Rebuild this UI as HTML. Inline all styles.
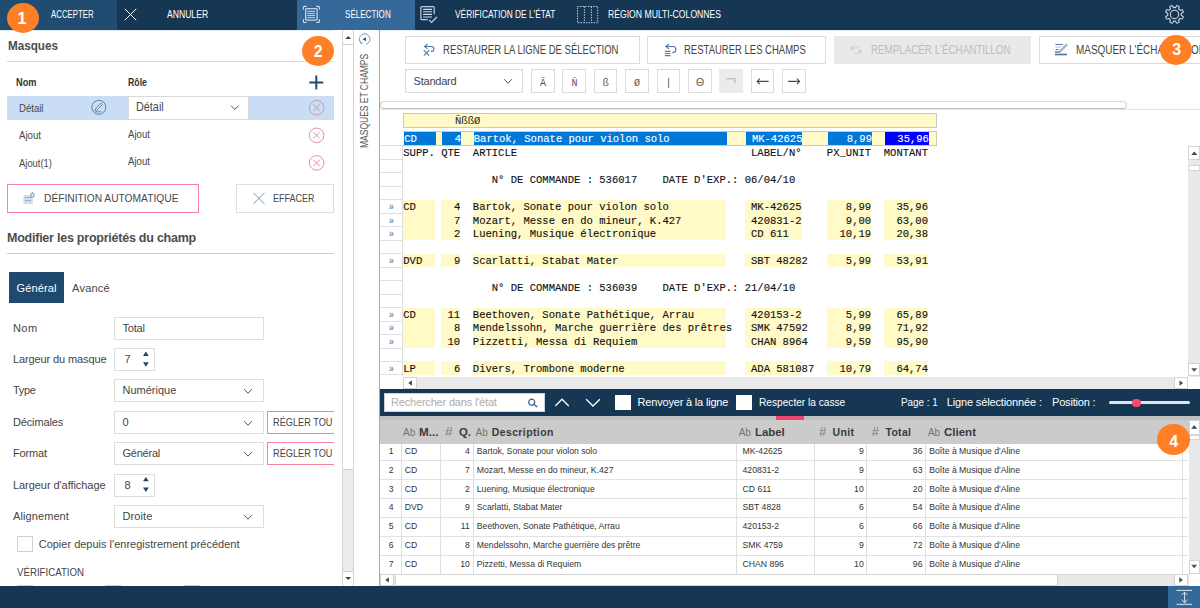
<!DOCTYPE html>
<html lang="fr"><head><meta charset="utf-8"><title>Monarch</title><style>
html,body{margin:0;padding:0;}
body{width:1200px;height:608px;overflow:hidden;background:#fff;font-family:"Liberation Sans",sans-serif;position:relative;}
.a{position:absolute;box-sizing:border-box;}
.t{white-space:pre;}
</style></head><body>
<div class="a" style="left:0px;top:0px;width:1200px;height:30px;background:#163754;"></div>
<div class="a" style="left:0px;top:0px;width:117px;height:30px;background:#204c72;"></div>
<div class="a" style="left:297.4px;top:0px;width:117.6px;height:30px;background:#35699a;"></div>
<span class="a t" style="top:9.00px;font-size:10.5px;line-height:10.5px;color:#fff;transform:scaleX(0.7467);left:50.80px;transform-origin:0 50%;">ACCEPTER</span>
<svg class="a" style="left:124px;top:8px;" width="14" height="14" viewBox="-0.5 -0.5 14 14" fill="none"><path d="M0.3 0.3L11.7 11.7M11.7 0.3L0.3 11.7" stroke="#fff" stroke-width="1"/></svg>
<span class="a t" style="top:9.00px;font-size:10.5px;line-height:10.5px;color:#fff;transform:scaleX(0.8189);left:167.20px;transform-origin:0 50%;">ANNULER</span>
<svg class="a" style="left:302px;top:5px;" width="20" height="20" viewBox="0 0 20 20" fill="none"><g stroke="#d3dfeb" stroke-width="1.1"><path d="M1.4 4.6V2.4Q1.4 1.4 2.4 1.4H4.6M14.2 1.4H16.4Q17.4 1.4 17.4 2.4V4.6M17.4 14.3V16.5Q17.4 17.5 16.4 17.5H14.2M4.6 17.5H2.4Q1.4 17.5 1.4 16.5V14.3"/><rect x="3.7" y="3.7" width="11.4" height="11.5" rx="1" stroke-width="1.3" stroke="#c3d3e3"/><path d="M5.3 6.35H13M5.3 8.45H13M5.3 10.55H13M5.3 12.65H13" stroke-width=".9"/></g></svg>
<span class="a t" style="top:9.00px;font-size:10.5px;line-height:10.5px;color:#fff;transform:scaleX(0.7679);left:345.00px;transform-origin:0 50%;">SÉLECTION</span>
<svg class="a" style="left:420px;top:5px;" width="19" height="20" viewBox="0 0 19 20" fill="none"><g stroke="#cfdbe7" stroke-width="1.1"><path d="M7.8 14.7H1.9Q0.9 14.7 0.9 13.7V2.7Q0.9 1.7 1.9 1.7H13.2Q14.2 1.7 14.2 2.7V9.3" stroke-width="1.2" stroke="#bccbda"/><path d="M3.1 4.4H12M3.1 6.7H12M3.1 9.4H12M3.1 12H12" stroke-width="1.1"/><path d="M9.2 14.9L11.5 17.5L16.9 12"/></g></svg>
<span class="a t" style="top:9.00px;font-size:10.5px;line-height:10.5px;color:#fff;transform:scaleX(0.7943);left:454.80px;transform-origin:0 50%;">VÉRIFICATION DE L&#x27;ÉTAT</span>
<svg class="a" style="left:577px;top:6px;" width="23" height="19" viewBox="0 0 23 19" fill="none"><g stroke="#c5d2df" stroke-width="1" stroke-dasharray="1.4 1.2"><rect x="0.5" y="0.5" width="20.2" height="16.2"/><path d="M7.4 0.5V16.5M14.4 0.5V16.5"/></g></svg>
<span class="a t" style="top:9.00px;font-size:10.5px;line-height:10.5px;color:#fff;transform:scaleX(0.8226);left:607.60px;transform-origin:0 50%;">RÉGION MULTI-COLONNES</span>
<svg class="a" style="left:1164px;top:4px;" width="22" height="22" viewBox="-0.5 -0.4 22 22" fill="none"><g stroke="#cbd8e5" stroke-width="1.1" stroke-linejoin="round"><circle cx="10" cy="10" r="4.2"/><path d="M16.75 10.00L16.74 10.27L16.73 10.53L16.70 10.79L16.90 11.09L17.80 11.55L18.67 12.08L18.81 12.48L18.70 12.83L18.58 13.17L18.45 13.50L18.31 13.83L18.15 14.15L17.98 14.47L17.60 14.66L16.61 14.42L15.65 14.11L15.30 14.18L15.13 14.38L14.96 14.58L14.77 14.77L14.58 14.96L14.38 15.13L14.18 15.30L14.11 15.65L14.42 16.61L14.66 17.60L14.47 17.98L14.15 18.15L13.83 18.31L13.50 18.45L13.17 18.58L12.83 18.70L12.48 18.81L12.08 18.67L11.55 17.80L11.09 16.90L10.79 16.70L10.53 16.73L10.27 16.74L10.00 16.75L9.73 16.74L9.47 16.73L9.21 16.70L8.91 16.90L8.45 17.80L7.92 18.67L7.52 18.81L7.17 18.70L6.83 18.58L6.50 18.45L6.17 18.31L5.85 18.15L5.53 17.98L5.34 17.60L5.58 16.61L5.89 15.65L5.82 15.30L5.62 15.13L5.42 14.96L5.23 14.77L5.04 14.58L4.87 14.38L4.70 14.18L4.35 14.11L3.39 14.42L2.40 14.66L2.02 14.47L1.85 14.15L1.69 13.83L1.55 13.50L1.42 13.17L1.30 12.83L1.19 12.48L1.33 12.08L2.20 11.55L3.10 11.09L3.30 10.79L3.27 10.53L3.26 10.27L3.25 10.00L3.26 9.73L3.27 9.47L3.30 9.21L3.10 8.91L2.20 8.45L1.33 7.92L1.19 7.52L1.30 7.17L1.42 6.83L1.55 6.50L1.69 6.17L1.85 5.85L2.02 5.53L2.40 5.34L3.39 5.58L4.35 5.89L4.70 5.82L4.87 5.62L5.04 5.42L5.23 5.23L5.42 5.04L5.62 4.87L5.82 4.70L5.89 4.35L5.58 3.39L5.34 2.40L5.53 2.02L5.85 1.85L6.17 1.69L6.50 1.55L6.83 1.42L7.17 1.30L7.52 1.19L7.92 1.33L8.45 2.20L8.91 3.10L9.21 3.30L9.47 3.27L9.73 3.26L10.00 3.25L10.27 3.26L10.53 3.27L10.79 3.30L11.09 3.10L11.55 2.20L12.08 1.33L12.48 1.19L12.83 1.30L13.17 1.42L13.50 1.55L13.83 1.69L14.15 1.85L14.47 2.02L14.66 2.40L14.42 3.39L14.11 4.35L14.18 4.70L14.38 4.87L14.58 5.04L14.77 5.23L14.96 5.42L15.13 5.62L15.30 5.82L15.65 5.89L16.61 5.58L17.60 5.34L17.98 5.53L18.15 5.85L18.31 6.17L18.45 6.50L18.58 6.83L18.70 7.17L18.81 7.52L18.67 7.92L17.80 8.45L16.90 8.91L16.70 9.21L16.73 9.47L16.74 9.73z"/></g></svg>
<div class="a" style="left:0px;top:29.7px;width:1200px;height:1px;background:#e4eaf1;"></div>
<span class="a t" style="top:40.00px;font-size:12.5px;line-height:12.5px;color:#4d4d4d;font-weight:700;transform:scaleX(0.9346);left:7.50px;transform-origin:0 50%;">Masques</span>
<div class="a" style="left:7px;top:61px;width:327px;height:1px;background:#d9d9d9;"></div>
<span class="a t" style="top:77.00px;font-size:10.5px;line-height:10.5px;color:#333;font-weight:700;transform:scaleX(0.8782);left:15.80px;transform-origin:0 50%;">Nom</span>
<span class="a t" style="top:77.00px;font-size:10.5px;line-height:10.5px;color:#333;font-weight:700;transform:scaleX(0.8346);left:128.30px;transform-origin:0 50%;">Rôle</span>
<svg class="a" style="left:309px;top:75px;" width="16" height="16" viewBox="-0.3 -0.5 16 16" fill="none"><path d="M7 0V14M0 7H14" stroke="#1f4a70" stroke-width="2"/></svg>
<div class="a" style="left:7px;top:96.1px;width:327px;height:23.6px;background:#c9ddf4;"></div>
<span class="a t" style="top:103.00px;font-size:11px;line-height:11px;color:#484848;transform:scaleX(0.8711);left:19.00px;transform-origin:0 50%;">Détail</span>
<svg class="a" style="left:91px;top:99px;" width="17" height="18" viewBox="0 -0.5 17 18" fill="none"><g stroke="#4f779f" stroke-width=".9"><circle cx="7.8" cy="7.8" r="7"/><path d="M9.9 3.6L11.4 5.1L5.6 10.9L3.9 11.3L4.4 9.4zM4.5 12.3H10.5" stroke-width=".8"/></g></svg>
<div class="a" style="left:127.9px;top:96.4px;width:121.3px;height:23.2px;background:#fff;border:1px solid #d9d9d9;"></div>
<span class="a t" style="top:101.00px;font-size:12px;line-height:12px;color:#484848;transform:scaleX(0.9026);left:136.30px;transform-origin:0 50%;">Détail</span>
<svg class="a" style="left:230px;top:105px;" width="11" height="7" viewBox="-0.6 -0.2 11 7" fill="none"><path d="M0.4 0.4L4.2 4.3L8 0.4" stroke="#555" stroke-width="1"/></svg>
<svg class="a" style="left:308px;top:99px;" width="18" height="18" viewBox="-0.6 -0.7 18 18" fill="none"><g stroke="#e58f9b" stroke-width="1"><circle cx="8" cy="8" r="7.3"/><path d="M4.8 4.8L11.2 11.2M11.2 4.8L4.8 11.2"/></g></svg>
<svg class="a" style="left:308px;top:127px;" width="18" height="18" viewBox="-0.6 -0.3 18 18" fill="none"><g stroke="#e58f9b" stroke-width="1"><circle cx="8" cy="8" r="7.3"/><path d="M4.8 4.8L11.2 11.2M11.2 4.8L4.8 11.2"/></g></svg>
<svg class="a" style="left:308px;top:154px;" width="18" height="18" viewBox="-0.6 -0.9 18 18" fill="none"><g stroke="#e58f9b" stroke-width="1"><circle cx="8" cy="8" r="7.3"/><path d="M4.8 4.8L11.2 11.2M11.2 4.8L4.8 11.2"/></g></svg>
<span class="a t" style="top:130.00px;font-size:11px;line-height:11px;color:#484848;transform:scaleX(0.8773);left:19.00px;transform-origin:0 50%;">Ajout</span>
<span class="a t" style="top:129.00px;font-size:11px;line-height:11px;color:#484848;transform:scaleX(0.8773);left:128.00px;transform-origin:0 50%;">Ajout</span>
<span class="a t" style="top:158.00px;font-size:11px;line-height:11px;color:#484848;transform:scaleX(0.8564);left:19.00px;transform-origin:0 50%;">Ajout(1)</span>
<span class="a t" style="top:156.00px;font-size:11px;line-height:11px;color:#484848;transform:scaleX(0.8773);left:128.00px;transform-origin:0 50%;">Ajout</span>
<div class="a" style="left:7px;top:184px;width:192px;height:29px;background:#fff;border:1px solid #f9839a;"></div>
<span class="a t" style="top:193.00px;font-size:11.5px;line-height:11.5px;color:#484848;transform:scaleX(0.8907);left:43.60px;transform-origin:0 50%;">DÉFINITION AUTOMATIQUE</span>
<svg class="a" style="left:22px;top:191px;" width="16" height="16" viewBox="0 0 16 16" fill="none"><rect x="1.4" y="3.9" width="9.4" height="9.4" rx="1" fill="#d3dfea"/><g stroke="#5b7fa3" stroke-width=".9"><path d="M3 6.6H9.4M3 9.6H9.4" stroke-dasharray="1.2 1"/><path d="M10.4 1.2L11.1 3L13 3.3L11.6 4.5L12 6.3L10.4 5.4L8.9 6.3L9.3 4.5L8 3.3L9.8 3z" stroke-width=".7" fill="#eef3f8"/></g></svg>
<div class="a" style="left:236px;top:184px;width:98px;height:29px;background:#fff;border:1px solid #dfdfdf;"></div>
<svg class="a" style="left:253px;top:192px;" width="13" height="14" viewBox="0 -0.5 13 14" fill="none"><path d="M0.3 0.3L11.5 11.5M11.5 0.3L0.3 11.5" stroke="#7894b0" stroke-width="1"/></svg>
<span class="a t" style="top:193.00px;font-size:11.5px;line-height:11.5px;color:#484848;transform:scaleX(0.7823);left:272.50px;transform-origin:0 50%;">EFFACER</span>
<span class="a t" style="top:232.00px;font-size:12.5px;line-height:12.5px;color:#4d4d4d;font-weight:700;letter-spacing:-0.237px;left:7.00px;transform-origin:0 50%;">Modifier les propriétés du champ</span>
<div class="a" style="left:7px;top:253.2px;width:327px;height:1.2px;background:#cdcdcd;"></div>
<div class="a" style="left:9px;top:272px;width:55px;height:31px;background:#1f4a70;"></div>
<span class="a t" style="top:283.00px;font-size:11px;line-height:11px;color:#fff;letter-spacing:0.123px;left:16.50px;transform-origin:0 50%;">Général</span>
<span class="a t" style="top:283.00px;font-size:11px;line-height:11px;color:#454545;letter-spacing:0.250px;left:72.00px;transform-origin:0 50%;">Avancé</span>
<span class="a t" style="top:323.00px;font-size:11px;line-height:11px;color:#454545;letter-spacing:0.422px;left:13.00px;transform-origin:0 50%;">Nom</span>
<div class="a" style="left:114px;top:316.6px;width:150px;height:23.7px;background:#fff;border:1px solid #dedede;"></div>
<span class="a t" style="top:323.00px;font-size:11px;line-height:11px;color:#454545;letter-spacing:-0.210px;left:122.50px;transform-origin:0 50%;">Total</span>
<span class="a t" style="top:354.00px;font-size:11px;line-height:11px;color:#454545;letter-spacing:-0.112px;left:13.00px;transform-origin:0 50%;">Largeur du masque</span>
<div class="a" style="left:114.2px;top:348.2px;width:41px;height:23.3px;background:#fff;border:1px solid #dedede;"></div>
<span class="a t" style="top:354.00px;font-size:11px;line-height:11px;color:#454545;left:124.50px;">7</span>
<svg class="a" style="left:143px;top:351px;" width="7" height="18" viewBox="0 -0.6 7 18" fill="none"><path d="M2.9 0L5.8 4.4H0zM2.9 15.1L5.8 10.7H0z" fill="#1f4a70"/></svg>
<span class="a t" style="top:385.00px;font-size:11px;line-height:11px;color:#454545;letter-spacing:-0.340px;left:13.00px;transform-origin:0 50%;">Type</span>
<div class="a" style="left:114px;top:379.1px;width:150px;height:23px;background:#fff;border:1px solid #dedede;"></div>
<span class="a t" style="top:385.00px;font-size:11px;line-height:11px;color:#454545;letter-spacing:-0.001px;left:122.50px;transform-origin:0 50%;">Numérique</span>
<svg class="a" style="left:243px;top:388px;" width="11" height="8" viewBox="-0.7 -0.8 11 8" fill="none"><path d="M0.4 0.4L4.3 4.4L8.2 0.4" stroke="#555" stroke-width="1"/></svg>
<span class="a t" style="top:417.00px;font-size:11px;line-height:11px;color:#454545;letter-spacing:-0.151px;left:13.00px;transform-origin:0 50%;">Décimales</span>
<div class="a" style="left:114px;top:411.3px;width:150px;height:23px;background:#fff;border:1px solid #dedede;"></div>
<span class="a t" style="top:417.00px;font-size:11px;line-height:11px;color:#454545;left:122.50px;">0</span>
<svg class="a" style="left:243px;top:420px;" width="11" height="8" viewBox="-0.7 -0.8 11 8" fill="none"><path d="M0.4 0.4L4.3 4.4L8.2 0.4" stroke="#555" stroke-width="1"/></svg>
<div class="a" style="left:267px;top:411.3px;width:75px;height:23px;background:#fff;border:1px solid #f9839a;"></div>
<span class="a t" style="top:417.00px;font-size:11.5px;line-height:11.5px;color:#454545;transform:scaleX(0.8002);left:272.50px;transform-origin:0 50%;">RÉGLER TOU</span>
<span class="a t" style="top:448.00px;font-size:11px;line-height:11px;color:#454545;letter-spacing:-0.141px;left:13.00px;transform-origin:0 50%;">Format</span>
<div class="a" style="left:114px;top:442.3px;width:150px;height:23px;background:#fff;border:1px solid #dedede;"></div>
<span class="a t" style="top:448.00px;font-size:11px;line-height:11px;color:#454545;letter-spacing:-0.234px;left:122.50px;transform-origin:0 50%;">Général</span>
<svg class="a" style="left:243px;top:451px;" width="11" height="8" viewBox="-0.7 -0.8 11 8" fill="none"><path d="M0.4 0.4L4.3 4.4L8.2 0.4" stroke="#555" stroke-width="1"/></svg>
<div class="a" style="left:267px;top:442.3px;width:75px;height:23px;background:#fff;border:1px solid #f9839a;"></div>
<span class="a t" style="top:448.00px;font-size:11.5px;line-height:11.5px;color:#454545;transform:scaleX(0.8002);left:272.50px;transform-origin:0 50%;">RÉGLER TOU</span>
<span class="a t" style="top:480.00px;font-size:11px;line-height:11px;color:#454545;letter-spacing:-0.060px;left:13.00px;transform-origin:0 50%;">Largeur d&#x27;affichage</span>
<div class="a" style="left:114.2px;top:473.5px;width:41px;height:23.3px;background:#fff;border:1px solid #dedede;"></div>
<span class="a t" style="top:480.00px;font-size:11px;line-height:11px;color:#454545;left:124.50px;">8</span>
<svg class="a" style="left:143px;top:476px;" width="7" height="18" viewBox="0 -0.9 7 18" fill="none"><path d="M2.9 0L5.8 4.4H0zM2.9 15.1L5.8 10.7H0z" fill="#1f4a70"/></svg>
<span class="a t" style="top:511.00px;font-size:11px;line-height:11px;color:#454545;letter-spacing:0.095px;left:13.00px;transform-origin:0 50%;">Alignement</span>
<div class="a" style="left:114px;top:505.2px;width:150px;height:23px;background:#fff;border:1px solid #dedede;"></div>
<span class="a t" style="top:511.00px;font-size:11px;line-height:11px;color:#454545;letter-spacing:0.109px;left:122.50px;transform-origin:0 50%;">Droite</span>
<svg class="a" style="left:243px;top:514px;" width="11" height="8" viewBox="-0.7 -0.8 11 8" fill="none"><path d="M0.4 0.4L4.3 4.4L8.2 0.4" stroke="#555" stroke-width="1"/></svg>
<div class="a" style="left:16.5px;top:536px;width:16px;height:16px;background:#fff;border:1px solid #cfcfcf;"></div>
<span class="a t" style="top:539.00px;font-size:11px;line-height:11px;color:#454545;letter-spacing:-0.001px;left:38.70px;transform-origin:0 50%;">Copier depuis l&#x27;enregistrement précédent</span>
<span class="a t" style="top:567.00px;font-size:11px;line-height:11px;color:#454545;transform:scaleX(0.8792);left:17.00px;transform-origin:0 50%;">VÉRIFICATION</span>
<div class="a" style="left:16.5px;top:585px;width:16px;height:16px;background:#fff;border:1px solid #cfcfcf;"></div>
<div class="a" style="left:105px;top:585px;width:16px;height:16px;background:#fff;border:1px solid #cfcfcf;"></div>
<div class="a" style="left:184px;top:585px;width:16px;height:16px;background:#fff;border:1px solid #cfcfcf;"></div>
<div class="a" style="left:334px;top:30px;width:46px;height:556px;background:#fff;"></div>
<div class="a" style="left:342.1px;top:30px;width:11.8px;height:556px;background:#ececec;border:0;border-left:1px solid #d4d4d4;border-right:1px solid #d4d4d4;"></div>
<div class="a" style="left:343.1px;top:30px;width:9.8px;height:439px;background:#fff;"></div>
<div class="a" style="left:343.1px;top:43.5px;width:9.8px;height:1px;background:#cfcfcf;"></div>
<div class="a" style="left:343.1px;top:468.5px;width:9.8px;height:1px;background:#cfcfcf;"></div>
<div class="a" style="left:343.1px;top:571px;width:9.8px;height:15px;background:#fff;border:0;border-top:1px solid #cfcfcf;"></div>
<svg class="a" style="left:345px;top:36px;" width="8" height="4" viewBox="-0.2 0 8 4" fill="none"><path d="M3 0L6 3H0z" fill="#444"/></svg>
<svg class="a" style="left:345px;top:577px;" width="8" height="4" viewBox="-0.2 0 8 4" fill="none"><path d="M0 0H6L3 3z" fill="#444"/></svg>
<svg class="a" style="left:358px;top:33px;" width="14" height="14" viewBox="0 0 14 14" fill="none"><g stroke="#6f8fae" stroke-width=".9"><path d="M2.9 9.9A5.3 5.3 0 1 1 8 11.3"/><path d="M2.2 8.2L2.9 10.5L5.1 10"/></g><path d="M4.6 6.2L7.9 4.2V8.3z" fill="#1f4a70"/></svg>
<span class="a t" style="left:359.4px;top:148px;font-size:10.5px;line-height:10.5px;color:#555;transform-origin:0 0;transform:rotate(-90deg) scaleX(0.8086);">MASQUES ET CHAMPS</span>
<div class="a" style="left:405px;top:35.5px;width:235px;height:28.5px;background:#fff;border:1px solid #dcdcdc;"></div>
<svg class="a" style="left:422px;top:42px;" width="15" height="16" viewBox="0 0 15 16" fill="none"><g stroke="#52779b" stroke-width="1.1"><path d="M5.5 2L2.6 4.5L5.5 6.9M2.6 4.5H9.5A2.45 2.45 0 0 1 9.5 9.4H8.8"/><path d="M1.8 8.2L7.2 13.6M7.2 8.2L1.8 13.6"/></g></svg>
<span class="a t" style="top:44.00px;font-size:12px;line-height:12px;color:#444;transform:scaleX(0.7935);left:442.50px;transform-origin:0 50%;">RESTAURER LA LIGNE DE SÉLECTION</span>
<div class="a" style="left:647px;top:35.5px;width:179px;height:28.5px;background:#fff;border:1px solid #dcdcdc;"></div>
<svg class="a" style="left:664px;top:42px;" width="15" height="16" viewBox="0 0 15 16" fill="none"><g stroke="#52779b" stroke-width="1.1"><path d="M5 2L1.9 4.5L5 6.9M1.9 4.5H8.9A3 3 0 0 1 8.9 10.5H8.1"/><path d="M0.8 9.4H6.4M0.8 11.5H6.4M0.8 13.6H6.4"/></g></svg>
<span class="a t" style="top:44.00px;font-size:12px;line-height:12px;color:#444;transform:scaleX(0.7915);left:683.75px;transform-origin:0 50%;">RESTAURER LES CHAMPS</span>
<div class="a" style="left:834px;top:35.5px;width:197px;height:28.5px;background:#e9e9e9;"></div>
<svg class="a" style="left:850px;top:45px;" width="14" height="11" viewBox="0 -0.5 14 11" fill="none"><g stroke="#d2d2d2" stroke-width="1"><path d="M5 1H8.5M8.5 1V2.5"/><path d="M8 8H4.5M4.5 8V6"/><rect x="1" y="1.5" width="3" height="2.5" fill="#d8d8d8"/><rect x="8.5" y="4.5" width="3" height="3" fill="#d8d8d8"/></g></svg>
<span class="a t" style="top:44.00px;font-size:12px;line-height:12px;color:#bdbdbd;transform:scaleX(0.8158);left:870.50px;transform-origin:0 50%;">REMPLACER L&#x27;ÉCHANTILLON</span>
<div class="a" style="left:1039px;top:35.5px;width:170px;height:28.5px;background:#fff;border:1px solid #dcdcdc;"></div>
<svg class="a" style="left:1055px;top:42px;" width="14" height="15" viewBox="0 0 14 15" fill="none"><g stroke="#52779b"><path d="M0.5 2.5H7.8M0.8 7.5H3.5" stroke-width="1"/><path d="M0.5 5H6" stroke-width="1" opacity=".45"/><path d="M0 10H3.8" stroke-width="1.4"/><path d="M0 12.5H12" stroke-width="1.7"/><path d="M11.3 2.3L12.2 3.2L5.6 9.8L4.1 10.3L4.6 8.9z" stroke-width=".9"/></g></svg>
<span class="a t" style="top:44.00px;font-size:12px;line-height:12px;color:#444;transform:scaleX(0.8280);left:1075.50px;transform-origin:0 50%;">MASQUER L&#x27;ÉCHANTILLON</span>
<div class="a" style="left:405px;top:69.3px;width:118px;height:23.4px;background:#fff;border:1px solid #dcdcdc;"></div>
<span class="a t" style="top:76.00px;font-size:11px;line-height:11px;color:#454545;letter-spacing:-0.207px;left:413.50px;transform-origin:0 50%;">Standard</span>
<svg class="a" style="left:503px;top:78px;" width="11" height="8" viewBox="-0.7 -0.8 11 8" fill="none"><path d="M0.4 0.4L4.3 4.4L8.2 0.4" stroke="#555" stroke-width="1"/></svg>
<div class="a" style="left:531px;top:69.3px;width:23.6px;height:23.4px;background:#fff;border:1px solid #dcdcdc;"></div>
<span class="a t" style="top:79.00px;font-size:10px;line-height:10px;color:#555;font-family:'Liberation Mono',monospace;left:539.99px;">Ã</span>
<div class="a" style="left:562.4px;top:69.3px;width:23.6px;height:23.4px;background:#fff;border:1px solid #dcdcdc;"></div>
<span class="a t" style="top:79.00px;font-size:10px;line-height:10px;color:#555;font-family:'Liberation Mono',monospace;left:571.39px;">Ñ</span>
<div class="a" style="left:593.8px;top:69.3px;width:23.6px;height:23.4px;background:#fff;border:1px solid #dcdcdc;"></div>
<span class="a t" style="top:79.00px;font-size:10px;line-height:10px;color:#555;font-family:'Liberation Mono',monospace;left:602.79px;">ß</span>
<div class="a" style="left:625.1px;top:69.3px;width:23.6px;height:23.4px;background:#fff;border:1px solid #dcdcdc;"></div>
<span class="a t" style="top:79.00px;font-size:10px;line-height:10px;color:#555;font-family:'Liberation Mono',monospace;left:634.09px;">Ø</span>
<div class="a" style="left:656.6px;top:69.3px;width:23.6px;height:23.4px;background:#fff;border:1px solid #dcdcdc;"></div>
<span class="a t" style="top:79.00px;font-size:10px;line-height:10px;color:#555;font-family:'Liberation Mono',monospace;left:665.59px;">|</span>
<div class="a" style="left:688px;top:69.3px;width:23.6px;height:23.4px;background:#fff;border:1px solid #dcdcdc;"></div>
<span class="a t" style="top:77.00px;font-size:10.5px;line-height:10.5px;color:#555;left:695.91px;">Θ</span>
<div class="a" style="left:719.4px;top:69.3px;width:23.6px;height:23.4px;background:#ebebeb;"></div>
<span class="a t" style="top:69.00px;font-size:19px;line-height:19px;color:#bcbcbc;left:725.35px;">¬</span>
<div class="a" style="left:750.9px;top:69.3px;width:23.6px;height:23.4px;background:#fff;border:1px solid #dcdcdc;"></div>
<svg class="a" style="left:754px;top:76px;" width="18" height="12" viewBox="-0.6 -0.4 18 12" fill="none"><path d="M2.5 5H14M5.2 2.3L2.5 5L5.2 7.7" stroke="#4a4a4a" stroke-width="1.1"/></svg>
<div class="a" style="left:782.4px;top:69.3px;width:23.6px;height:23.4px;background:#fff;border:1px solid #dcdcdc;"></div>
<svg class="a" style="left:786px;top:76px;" width="18" height="12" viewBox="-0.1 -0.4 18 12" fill="none"><path d="M2 5H13.5M10.8 2.3L13.5 5L10.8 7.7" stroke="#4a4a4a" stroke-width="1.1"/></svg>
<div class="a" style="left:380.3px;top:100.8px;width:746.7px;height:8px;background:#fff;border:1px solid #cbcbcb;border-radius:4px;border-top-color:#dadada;border-bottom-color:#c2c2c2;"></div>
<div class="a" style="left:381px;top:109px;width:819px;height:1px;background:#e3e3e3;"></div>
<div class="a" style="left:403px;top:113px;width:534px;height:15px;background:#fffac8;border:1px solid #c9c9c9;"></div>
<span class="a t" style="top:116.00px;font-size:10.55px;line-height:10.55px;color:#222;font-family:'Liberation Mono',monospace;letter-spacing:0.018px;left:455.00px;transform-origin:0 50%;">ÑßßØ</span>
<div class="a" style="left:403px;top:131px;width:534px;height:15px;background:#fffac8;border:0;border-top:1px solid #c9c9c9;border-bottom:1px solid #c9c9c9;border-right:1px solid #c9c9c9;"></div>
<div class="a" style="left:404.2px;top:131.6px;width:31.6px;height:13.8px;background:#0078d7;"></div>
<div class="a" style="left:442.1px;top:131.6px;width:19.0px;height:13.8px;background:#0078d7;"></div>
<div class="a" style="left:473.7px;top:131.6px;width:252.9px;height:13.8px;background:#0078d7;"></div>
<div class="a" style="left:745.6px;top:131.6px;width:56.9px;height:13.8px;background:#0078d7;"></div>
<div class="a" style="left:827.8px;top:131.6px;width:44.3px;height:13.8px;background:#0078d7;"></div>
<div class="a" style="left:884.7px;top:131.6px;width:44.3px;height:13.8px;background:#0000ff;"></div>
<span class="a t" style="top:134.00px;font-size:10.55px;line-height:10.55px;color:#fff;font-family:'Liberation Mono',monospace;letter-spacing:-0.014px;left:404.20px;transform-origin:0 50%;-webkit-text-stroke:0.12px #fff;">CD</span>
<span class="a t" style="top:134.00px;font-size:10.55px;line-height:10.55px;color:#fff;font-family:'Liberation Mono',monospace;letter-spacing:-0.022px;left:454.78px;transform-origin:0 50%;-webkit-text-stroke:0.12px #fff;">4</span>
<span class="a t" style="top:134.00px;font-size:10.55px;line-height:10.55px;color:#fff;font-family:'Liberation Mono',monospace;letter-spacing:-0.008px;left:473.74px;transform-origin:0 50%;-webkit-text-stroke:0.12px #fff;">Bartok, Sonate pour violon solo</span>
<span class="a t" style="top:134.00px;font-size:10.55px;line-height:10.55px;color:#fff;font-family:'Liberation Mono',monospace;letter-spacing:-0.008px;left:751.91px;transform-origin:0 50%;-webkit-text-stroke:0.12px #fff;">MK-42625</span>
<span class="a t" style="top:134.00px;font-size:10.55px;line-height:10.55px;color:#fff;font-family:'Liberation Mono',monospace;letter-spacing:-0.010px;left:846.74px;transform-origin:0 50%;-webkit-text-stroke:0.12px #fff;">8,99</span>
<span class="a t" style="top:134.00px;font-size:10.55px;line-height:10.55px;color:#fff;font-family:'Liberation Mono',monospace;letter-spacing:-0.009px;left:897.32px;transform-origin:0 50%;-webkit-text-stroke:0.12px #fff;">35,96</span>
<div class="a" style="left:381px;top:146px;width:22px;height:231px;background:#fff;"></div>
<div class="a" style="left:380px;top:145.4px;width:23px;height:1px;background:#e0e0e0;"></div>
<div class="a" style="left:380px;top:158.9px;width:23px;height:1px;background:#e0e0e0;"></div>
<div class="a" style="left:380px;top:172.3px;width:23px;height:1px;background:#e0e0e0;"></div>
<div class="a" style="left:380px;top:185.8px;width:23px;height:1px;background:#e0e0e0;"></div>
<div class="a" style="left:380px;top:199.3px;width:23px;height:1px;background:#e0e0e0;"></div>
<div class="a" style="left:380px;top:212.8px;width:23px;height:1px;background:#e0e0e0;"></div>
<div class="a" style="left:380px;top:226.2px;width:23px;height:1px;background:#e0e0e0;"></div>
<div class="a" style="left:380px;top:239.7px;width:23px;height:1px;background:#e0e0e0;"></div>
<div class="a" style="left:380px;top:253.2px;width:23px;height:1px;background:#e0e0e0;"></div>
<div class="a" style="left:380px;top:266.6px;width:23px;height:1px;background:#e0e0e0;"></div>
<div class="a" style="left:380px;top:280.1px;width:23px;height:1px;background:#e0e0e0;"></div>
<div class="a" style="left:380px;top:293.6px;width:23px;height:1px;background:#e0e0e0;"></div>
<div class="a" style="left:380px;top:307.0px;width:23px;height:1px;background:#e0e0e0;"></div>
<div class="a" style="left:380px;top:320.5px;width:23px;height:1px;background:#e0e0e0;"></div>
<div class="a" style="left:380px;top:334.0px;width:23px;height:1px;background:#e0e0e0;"></div>
<div class="a" style="left:380px;top:347.5px;width:23px;height:1px;background:#e0e0e0;"></div>
<div class="a" style="left:380px;top:360.9px;width:23px;height:1px;background:#e0e0e0;"></div>
<div class="a" style="left:380px;top:374.4px;width:23px;height:1px;background:#e0e0e0;"></div>
<div class="a" style="left:402.2px;top:146px;width:1px;height:230px;background:#dedede;"></div>
<span class="a t" style="top:148.00px;font-size:10.55px;line-height:10.55px;color:#111;font-family:'Liberation Mono',monospace;letter-spacing:-0.008px;left:403.30px;transform-origin:0 50%;-webkit-text-stroke:0.12px #111;">SUPP. QTE  ARTICLE</span>
<span class="a t" style="top:148.00px;font-size:10.55px;line-height:10.55px;color:#111;font-family:'Liberation Mono',monospace;letter-spacing:-0.008px;left:751.01px;transform-origin:0 50%;-webkit-text-stroke:0.12px #111;">LABEL/N°</span>
<span class="a t" style="top:148.00px;font-size:10.55px;line-height:10.55px;color:#111;font-family:'Liberation Mono',monospace;letter-spacing:-0.008px;left:826.87px;transform-origin:0 50%;-webkit-text-stroke:0.12px #111;">PX_UNIT</span>
<span class="a t" style="top:148.00px;font-size:10.55px;line-height:10.55px;color:#111;font-family:'Liberation Mono',monospace;letter-spacing:-0.008px;left:883.77px;transform-origin:0 50%;-webkit-text-stroke:0.12px #111;">MONTANT</span>
<span class="a t" style="top:175.00px;font-size:10.55px;line-height:10.55px;color:#111;font-family:'Liberation Mono',monospace;letter-spacing:-0.007px;left:491.81px;transform-origin:0 50%;-webkit-text-stroke:0.12px #111;">N° DE COMMANDE : 536017    DATE D&#x27;EXP.: 06/04/10</span>
<div class="a" style="left:403.3px;top:199.8px;width:31.6px;height:40.4px;background:#fffac8;"></div>
<div class="a" style="left:441.2px;top:199.8px;width:19.0px;height:40.4px;background:#fffac8;"></div>
<div class="a" style="left:472.8px;top:199.8px;width:252.9px;height:40.4px;background:#fffac8;"></div>
<div class="a" style="left:744.7px;top:199.8px;width:56.9px;height:40.4px;background:#fffac8;"></div>
<div class="a" style="left:826.9px;top:199.8px;width:44.3px;height:40.4px;background:#fffac8;"></div>
<div class="a" style="left:883.8px;top:199.8px;width:44.3px;height:40.4px;background:#fffac8;"></div>
<span class="a t" style="top:201.00px;font-size:11.5px;line-height:11.5px;color:#43658a;transform:scaleX(0.7493);left:389.00px;transform-origin:0 50%;">»</span>
<span class="a t" style="top:215.00px;font-size:11.5px;line-height:11.5px;color:#43658a;transform:scaleX(0.7493);left:389.00px;transform-origin:0 50%;">»</span>
<span class="a t" style="top:228.00px;font-size:11.5px;line-height:11.5px;color:#43658a;transform:scaleX(0.7493);left:389.00px;transform-origin:0 50%;">»</span>
<span class="a t" style="top:202.00px;font-size:10.55px;line-height:10.55px;color:#111;font-family:'Liberation Mono',monospace;letter-spacing:-0.014px;left:403.30px;transform-origin:0 50%;-webkit-text-stroke:0.12px #111;">CD</span>
<span class="a t" style="top:202.00px;font-size:10.55px;line-height:10.55px;color:#111;font-family:'Liberation Mono',monospace;letter-spacing:-0.022px;left:453.88px;transform-origin:0 50%;-webkit-text-stroke:0.12px #111;">4</span>
<span class="a t" style="top:202.00px;font-size:10.55px;line-height:10.55px;color:#111;font-family:'Liberation Mono',monospace;letter-spacing:-0.008px;left:472.84px;transform-origin:0 50%;-webkit-text-stroke:0.12px #111;">Bartok, Sonate pour violon solo</span>
<span class="a t" style="top:202.00px;font-size:10.55px;line-height:10.55px;color:#111;font-family:'Liberation Mono',monospace;letter-spacing:-0.008px;left:751.01px;transform-origin:0 50%;-webkit-text-stroke:0.12px #111;">MK-42625</span>
<span class="a t" style="top:202.00px;font-size:10.55px;line-height:10.55px;color:#111;font-family:'Liberation Mono',monospace;letter-spacing:-0.010px;left:845.84px;transform-origin:0 50%;-webkit-text-stroke:0.12px #111;">8,99</span>
<span class="a t" style="top:202.00px;font-size:10.55px;line-height:10.55px;color:#111;font-family:'Liberation Mono',monospace;letter-spacing:-0.009px;left:896.42px;transform-origin:0 50%;-webkit-text-stroke:0.12px #111;">35,96</span>
<span class="a t" style="top:216.00px;font-size:10.55px;line-height:10.55px;color:#111;font-family:'Liberation Mono',monospace;letter-spacing:-0.022px;left:453.88px;transform-origin:0 50%;-webkit-text-stroke:0.12px #111;">7</span>
<span class="a t" style="top:216.00px;font-size:10.55px;line-height:10.55px;color:#111;font-family:'Liberation Mono',monospace;letter-spacing:-0.008px;left:472.84px;transform-origin:0 50%;-webkit-text-stroke:0.12px #111;">Mozart, Messe en do mineur, K.427</span>
<span class="a t" style="top:216.00px;font-size:10.55px;line-height:10.55px;color:#111;font-family:'Liberation Mono',monospace;letter-spacing:-0.008px;left:751.01px;transform-origin:0 50%;-webkit-text-stroke:0.12px #111;">420831-2</span>
<span class="a t" style="top:216.00px;font-size:10.55px;line-height:10.55px;color:#111;font-family:'Liberation Mono',monospace;letter-spacing:-0.010px;left:845.84px;transform-origin:0 50%;-webkit-text-stroke:0.12px #111;">9,00</span>
<span class="a t" style="top:216.00px;font-size:10.55px;line-height:10.55px;color:#111;font-family:'Liberation Mono',monospace;letter-spacing:-0.009px;left:896.42px;transform-origin:0 50%;-webkit-text-stroke:0.12px #111;">63,00</span>
<span class="a t" style="top:229.00px;font-size:10.55px;line-height:10.55px;color:#111;font-family:'Liberation Mono',monospace;letter-spacing:-0.022px;left:453.88px;transform-origin:0 50%;-webkit-text-stroke:0.12px #111;">2</span>
<span class="a t" style="top:229.00px;font-size:10.55px;line-height:10.55px;color:#111;font-family:'Liberation Mono',monospace;letter-spacing:-0.007px;left:472.84px;transform-origin:0 50%;-webkit-text-stroke:0.12px #111;">Luening, Musique électronique</span>
<span class="a t" style="top:229.00px;font-size:10.55px;line-height:10.55px;color:#111;font-family:'Liberation Mono',monospace;letter-spacing:-0.009px;left:751.01px;transform-origin:0 50%;-webkit-text-stroke:0.12px #111;">CD 611</span>
<span class="a t" style="top:229.00px;font-size:10.55px;line-height:10.55px;color:#111;font-family:'Liberation Mono',monospace;letter-spacing:-0.009px;left:839.52px;transform-origin:0 50%;-webkit-text-stroke:0.12px #111;">10,19</span>
<span class="a t" style="top:229.00px;font-size:10.55px;line-height:10.55px;color:#111;font-family:'Liberation Mono',monospace;letter-spacing:-0.009px;left:896.42px;transform-origin:0 50%;-webkit-text-stroke:0.12px #111;">20,38</span>
<div class="a" style="left:403.3px;top:253.7px;width:31.6px;height:13.5px;background:#fffac8;"></div>
<div class="a" style="left:441.2px;top:253.7px;width:19.0px;height:13.5px;background:#fffac8;"></div>
<div class="a" style="left:472.8px;top:253.7px;width:252.9px;height:13.5px;background:#fffac8;"></div>
<div class="a" style="left:744.7px;top:253.7px;width:56.9px;height:13.5px;background:#fffac8;"></div>
<div class="a" style="left:826.9px;top:253.7px;width:44.3px;height:13.5px;background:#fffac8;"></div>
<div class="a" style="left:883.8px;top:253.7px;width:44.3px;height:13.5px;background:#fffac8;"></div>
<span class="a t" style="top:255.00px;font-size:11.5px;line-height:11.5px;color:#43658a;transform:scaleX(0.7493);left:389.00px;transform-origin:0 50%;">»</span>
<span class="a t" style="top:256.00px;font-size:10.55px;line-height:10.55px;color:#111;font-family:'Liberation Mono',monospace;letter-spacing:-0.011px;left:403.30px;transform-origin:0 50%;-webkit-text-stroke:0.12px #111;">DVD</span>
<span class="a t" style="top:256.00px;font-size:10.55px;line-height:10.55px;color:#111;font-family:'Liberation Mono',monospace;letter-spacing:-0.022px;left:453.88px;transform-origin:0 50%;-webkit-text-stroke:0.12px #111;">9</span>
<span class="a t" style="top:256.00px;font-size:10.55px;line-height:10.55px;color:#111;font-family:'Liberation Mono',monospace;letter-spacing:-0.007px;left:472.84px;transform-origin:0 50%;-webkit-text-stroke:0.12px #111;">Scarlatti, Stabat Mater</span>
<span class="a t" style="top:256.00px;font-size:10.55px;line-height:10.55px;color:#111;font-family:'Liberation Mono',monospace;letter-spacing:-0.008px;left:751.01px;transform-origin:0 50%;-webkit-text-stroke:0.12px #111;">SBT 48282</span>
<span class="a t" style="top:256.00px;font-size:10.55px;line-height:10.55px;color:#111;font-family:'Liberation Mono',monospace;letter-spacing:-0.010px;left:845.84px;transform-origin:0 50%;-webkit-text-stroke:0.12px #111;">5,99</span>
<span class="a t" style="top:256.00px;font-size:10.55px;line-height:10.55px;color:#111;font-family:'Liberation Mono',monospace;letter-spacing:-0.009px;left:896.42px;transform-origin:0 50%;-webkit-text-stroke:0.12px #111;">53,91</span>
<span class="a t" style="top:283.00px;font-size:10.55px;line-height:10.55px;color:#111;font-family:'Liberation Mono',monospace;letter-spacing:-0.007px;left:491.81px;transform-origin:0 50%;-webkit-text-stroke:0.12px #111;">N° DE COMMANDE : 536039    DATE D&#x27;EXP.: 21/04/10</span>
<div class="a" style="left:403.3px;top:307.5px;width:31.6px;height:40.4px;background:#fffac8;"></div>
<div class="a" style="left:441.2px;top:307.5px;width:19.0px;height:40.4px;background:#fffac8;"></div>
<div class="a" style="left:472.8px;top:307.5px;width:252.9px;height:40.4px;background:#fffac8;"></div>
<div class="a" style="left:744.7px;top:307.5px;width:56.9px;height:40.4px;background:#fffac8;"></div>
<div class="a" style="left:826.9px;top:307.5px;width:44.3px;height:40.4px;background:#fffac8;"></div>
<div class="a" style="left:883.8px;top:307.5px;width:44.3px;height:40.4px;background:#fffac8;"></div>
<span class="a t" style="top:309.00px;font-size:11.5px;line-height:11.5px;color:#43658a;transform:scaleX(0.7493);left:389.00px;transform-origin:0 50%;">»</span>
<span class="a t" style="top:322.00px;font-size:11.5px;line-height:11.5px;color:#43658a;transform:scaleX(0.7493);left:389.00px;transform-origin:0 50%;">»</span>
<span class="a t" style="top:336.00px;font-size:11.5px;line-height:11.5px;color:#43658a;transform:scaleX(0.7493);left:389.00px;transform-origin:0 50%;">»</span>
<span class="a t" style="top:310.00px;font-size:10.55px;line-height:10.55px;color:#111;font-family:'Liberation Mono',monospace;letter-spacing:-0.014px;left:403.30px;transform-origin:0 50%;-webkit-text-stroke:0.12px #111;">CD</span>
<span class="a t" style="top:310.00px;font-size:10.55px;line-height:10.55px;color:#111;font-family:'Liberation Mono',monospace;letter-spacing:-0.014px;left:447.55px;transform-origin:0 50%;-webkit-text-stroke:0.12px #111;">11</span>
<span class="a t" style="top:310.00px;font-size:10.55px;line-height:10.55px;color:#111;font-family:'Liberation Mono',monospace;letter-spacing:-0.007px;left:472.84px;transform-origin:0 50%;-webkit-text-stroke:0.12px #111;">Beethoven, Sonate Pathétique, Arrau</span>
<span class="a t" style="top:310.00px;font-size:10.55px;line-height:10.55px;color:#111;font-family:'Liberation Mono',monospace;letter-spacing:-0.008px;left:751.01px;transform-origin:0 50%;-webkit-text-stroke:0.12px #111;">420153-2</span>
<span class="a t" style="top:310.00px;font-size:10.55px;line-height:10.55px;color:#111;font-family:'Liberation Mono',monospace;letter-spacing:-0.010px;left:845.84px;transform-origin:0 50%;-webkit-text-stroke:0.12px #111;">5,99</span>
<span class="a t" style="top:310.00px;font-size:10.55px;line-height:10.55px;color:#111;font-family:'Liberation Mono',monospace;letter-spacing:-0.009px;left:896.42px;transform-origin:0 50%;-webkit-text-stroke:0.12px #111;">65,89</span>
<span class="a t" style="top:323.00px;font-size:10.55px;line-height:10.55px;color:#111;font-family:'Liberation Mono',monospace;letter-spacing:-0.022px;left:453.88px;transform-origin:0 50%;-webkit-text-stroke:0.12px #111;">8</span>
<span class="a t" style="top:323.00px;font-size:10.55px;line-height:10.55px;color:#111;font-family:'Liberation Mono',monospace;letter-spacing:-0.007px;left:472.84px;transform-origin:0 50%;-webkit-text-stroke:0.12px #111;">Mendelssohn, Marche guerrière des prêtres</span>
<span class="a t" style="top:323.00px;font-size:10.55px;line-height:10.55px;color:#111;font-family:'Liberation Mono',monospace;letter-spacing:-0.008px;left:751.01px;transform-origin:0 50%;-webkit-text-stroke:0.12px #111;">SMK 47592</span>
<span class="a t" style="top:323.00px;font-size:10.55px;line-height:10.55px;color:#111;font-family:'Liberation Mono',monospace;letter-spacing:-0.010px;left:845.84px;transform-origin:0 50%;-webkit-text-stroke:0.12px #111;">8,99</span>
<span class="a t" style="top:323.00px;font-size:10.55px;line-height:10.55px;color:#111;font-family:'Liberation Mono',monospace;letter-spacing:-0.009px;left:896.42px;transform-origin:0 50%;-webkit-text-stroke:0.12px #111;">71,92</span>
<span class="a t" style="top:337.00px;font-size:10.55px;line-height:10.55px;color:#111;font-family:'Liberation Mono',monospace;letter-spacing:-0.014px;left:447.55px;transform-origin:0 50%;-webkit-text-stroke:0.12px #111;">10</span>
<span class="a t" style="top:337.00px;font-size:10.55px;line-height:10.55px;color:#111;font-family:'Liberation Mono',monospace;letter-spacing:-0.007px;left:472.84px;transform-origin:0 50%;-webkit-text-stroke:0.12px #111;">Pizzetti, Messa di Requiem</span>
<span class="a t" style="top:337.00px;font-size:10.55px;line-height:10.55px;color:#111;font-family:'Liberation Mono',monospace;letter-spacing:-0.008px;left:751.01px;transform-origin:0 50%;-webkit-text-stroke:0.12px #111;">CHAN 8964</span>
<span class="a t" style="top:337.00px;font-size:10.55px;line-height:10.55px;color:#111;font-family:'Liberation Mono',monospace;letter-spacing:-0.010px;left:845.84px;transform-origin:0 50%;-webkit-text-stroke:0.12px #111;">9,59</span>
<span class="a t" style="top:337.00px;font-size:10.55px;line-height:10.55px;color:#111;font-family:'Liberation Mono',monospace;letter-spacing:-0.009px;left:896.42px;transform-origin:0 50%;-webkit-text-stroke:0.12px #111;">95,90</span>
<div class="a" style="left:403.3px;top:361.4px;width:31.6px;height:13.5px;background:#fffac8;"></div>
<div class="a" style="left:441.2px;top:361.4px;width:19.0px;height:13.5px;background:#fffac8;"></div>
<div class="a" style="left:472.8px;top:361.4px;width:252.9px;height:13.5px;background:#fffac8;"></div>
<div class="a" style="left:744.7px;top:361.4px;width:56.9px;height:13.5px;background:#fffac8;"></div>
<div class="a" style="left:826.9px;top:361.4px;width:44.3px;height:13.5px;background:#fffac8;"></div>
<div class="a" style="left:883.8px;top:361.4px;width:44.3px;height:13.5px;background:#fffac8;"></div>
<span class="a t" style="top:363.00px;font-size:11.5px;line-height:11.5px;color:#43658a;transform:scaleX(0.7493);left:389.00px;transform-origin:0 50%;">»</span>
<span class="a t" style="top:364.00px;font-size:10.55px;line-height:10.55px;color:#111;font-family:'Liberation Mono',monospace;letter-spacing:-0.014px;left:403.30px;transform-origin:0 50%;-webkit-text-stroke:0.12px #111;">LP</span>
<span class="a t" style="top:364.00px;font-size:10.55px;line-height:10.55px;color:#111;font-family:'Liberation Mono',monospace;letter-spacing:-0.022px;left:453.88px;transform-origin:0 50%;-webkit-text-stroke:0.12px #111;">6</span>
<span class="a t" style="top:364.00px;font-size:10.55px;line-height:10.55px;color:#111;font-family:'Liberation Mono',monospace;letter-spacing:-0.007px;left:472.84px;transform-origin:0 50%;-webkit-text-stroke:0.12px #111;">Divers, Trombone moderne</span>
<span class="a t" style="top:364.00px;font-size:10.55px;line-height:10.55px;color:#111;font-family:'Liberation Mono',monospace;letter-spacing:-0.008px;left:751.01px;transform-origin:0 50%;-webkit-text-stroke:0.12px #111;">ADA 581087</span>
<span class="a t" style="top:364.00px;font-size:10.55px;line-height:10.55px;color:#111;font-family:'Liberation Mono',monospace;letter-spacing:-0.009px;left:839.52px;transform-origin:0 50%;-webkit-text-stroke:0.12px #111;">10,79</span>
<span class="a t" style="top:364.00px;font-size:10.55px;line-height:10.55px;color:#111;font-family:'Liberation Mono',monospace;letter-spacing:-0.009px;left:896.42px;transform-origin:0 50%;-webkit-text-stroke:0.12px #111;">64,74</span>
<div class="a" style="left:1188.2px;top:146px;width:11.5px;height:230.5px;background:#e9e9e9;"></div>
<div class="a" style="left:1188.2px;top:146px;width:11.5px;height:13.8px;background:#fff;border:1px solid #d4d4d4;"></div>
<svg class="a" style="left:1191px;top:151px;" width="8" height="5" viewBox="-0.3 -0.6 8 5" fill="none"><path d="M3 0L6 3.3H0z" fill="#444"/></svg>
<div class="a" style="left:1188.2px;top:165px;width:11.5px;height:6.4px;background:#fff;border:1px solid #d4d4d4;"></div>
<div class="a" style="left:1188.2px;top:362.8px;width:11.5px;height:13.6px;background:#fff;border:1px solid #d4d4d4;"></div>
<svg class="a" style="left:1191px;top:368px;" width="8" height="5" viewBox="-0.2 -0.3 8 5" fill="none"><path d="M0 0H6L3 3.4z" fill="#555"/></svg>
<div class="a" style="left:380px;top:376.8px;width:808.5px;height:12px;background:#e9e9e9;"></div>
<div class="a" style="left:380px;top:376.8px;width:23px;height:12px;background:#fff;"></div>
<div class="a" style="left:403.3px;top:376.8px;width:14.2px;height:12px;background:#fff;border:1px solid #d4d4d4;"></div>
<svg class="a" style="left:408px;top:380px;" width="5" height="7" viewBox="-0.3 -0.3 5 7" fill="none"><path d="M3.6 0V5.4L0 2.7z" fill="#444"/></svg>
<div class="a" style="left:1174.3px;top:376.8px;width:14.2px;height:12px;background:#fff;border:1px solid #d4d4d4;"></div>
<svg class="a" style="left:1179px;top:380px;" width="6" height="7" viewBox="-0.5 -0.4 6 7" fill="none"><path d="M0 0L3.6 2.7L0 5.4z" fill="#444"/></svg>
<div class="a" style="left:1188.2px;top:376.8px;width:11.5px;height:12px;background:#fff;"></div>
<div class="a" style="left:380px;top:388.7px;width:820px;height:27px;background:#163754;"></div>
<div class="a" style="left:384px;top:393px;width:161px;height:19px;background:#fff;border:1px solid #c8d2dc;"></div>
<span class="a t" style="top:397.00px;font-size:11px;line-height:11px;color:#adadad;letter-spacing:-0.183px;left:391.00px;transform-origin:0 50%;">Rechercher dans l&#x27;état</span>
<svg class="a" style="left:528px;top:398px;" width="11" height="11" viewBox="0 -0.5 11 11" fill="none"><g stroke="#2c5a85" stroke-width="1.2"><circle cx="3.7" cy="3.7" r="3"/><path d="M6 6L9.2 8.4"/></g></svg>
<svg class="a" style="left:554px;top:398px;" width="17" height="10" viewBox="-0.5 0 17 10" fill="none"><path d="M0.7 8L7.5 1.2L14.3 8" stroke="#fff" stroke-width="1.3"/></svg>
<svg class="a" style="left:585px;top:398px;" width="17" height="11" viewBox="-0.5 -0.5 17 11" fill="none"><path d="M0.7 0.7L7.5 7.5L14.3 0.7" stroke="#fff" stroke-width="1.3"/></svg>
<div class="a" style="left:615px;top:395px;width:15.8px;height:15.2px;background:#fff;"></div>
<span class="a t" style="top:397.00px;font-size:11px;line-height:11px;color:#fff;letter-spacing:-0.180px;left:637.50px;transform-origin:0 50%;">Renvoyer à la ligne</span>
<div class="a" style="left:736.2px;top:395px;width:15.8px;height:15.2px;background:#fff;"></div>
<span class="a t" style="top:397.00px;font-size:11px;line-height:11px;color:#fff;transform:scaleX(0.9220);left:758.75px;transform-origin:0 50%;">Respecter la casse</span>
<span class="a t" style="top:397.00px;font-size:11px;line-height:11px;color:#fff;transform:scaleX(0.8930);left:901.30px;transform-origin:0 50%;">Page : 1</span>
<span class="a t" style="top:397.00px;font-size:11px;line-height:11px;color:#fff;letter-spacing:-0.133px;left:946.70px;transform-origin:0 50%;">Ligne sélectionnée :</span>
<span class="a t" style="top:397.00px;font-size:11px;line-height:11px;color:#fff;letter-spacing:-0.175px;left:1052.00px;transform-origin:0 50%;">Position :</span>
<div class="a" style="left:1109px;top:401px;width:80.5px;height:3px;background:#e4e4e4;border:0;border-radius:1.5px;"></div>
<div class="a" style="left:1132px;top:398.5px;width:8.5px;height:8.5px;background:#f24a73;border:0;border-radius:50%;"></div>
<div class="a" style="left:380px;top:416px;width:809px;height:27.5px;background:#cbcbcb;"></div>
<div class="a" style="left:380px;top:415.6px;width:820px;height:4.2px;background:#c0c0c0;"></div>
<div class="a" style="left:776.25px;top:416px;width:27.5px;height:3.7px;background:#f0436e;"></div>
<span class="a t" style="top:428.00px;font-size:10px;line-height:10px;color:#747474;letter-spacing:0.133px;left:403.00px;transform-origin:0 50%;">Ab</span>
<span class="a t" style="top:427.00px;font-size:10.5px;line-height:10.5px;color:#3a3a3a;font-weight:700;transform:scaleX(1.1143);left:419.20px;transform-origin:0 50%;">M...</span>
<span class="a t" style="top:426.00px;font-size:12.5px;line-height:12.5px;color:#7a7a7a;transform:scaleX(1.0930);left:444.70px;transform-origin:0 50%;">#</span>
<span class="a t" style="top:427.00px;font-size:10.5px;line-height:10.5px;color:#3a3a3a;font-weight:700;transform:scaleX(1.0817);left:458.70px;transform-origin:0 50%;">Q.</span>
<span class="a t" style="top:428.00px;font-size:10px;line-height:10px;color:#747474;letter-spacing:0.133px;left:475.50px;transform-origin:0 50%;">Ab</span>
<span class="a t" style="top:427.00px;font-size:10.5px;line-height:10.5px;color:#3a3a3a;font-weight:700;letter-spacing:0.394px;left:491.70px;transform-origin:0 50%;">Description</span>
<span class="a t" style="top:428.00px;font-size:10px;line-height:10px;color:#747474;letter-spacing:-0.117px;left:738.75px;transform-origin:0 50%;">Ab</span>
<span class="a t" style="top:427.00px;font-size:10.5px;line-height:10.5px;color:#3a3a3a;font-weight:700;transform:scaleX(1.0843);left:754.50px;transform-origin:0 50%;">Label</span>
<span class="a t" style="top:426.00px;font-size:12.5px;line-height:12.5px;color:#7a7a7a;letter-spacing:0.447px;left:819.25px;transform-origin:0 50%;">#</span>
<span class="a t" style="top:427.00px;font-size:10.5px;line-height:10.5px;color:#3a3a3a;font-weight:700;letter-spacing:0.332px;left:832.50px;transform-origin:0 50%;">Unit</span>
<span class="a t" style="top:426.00px;font-size:12.5px;line-height:12.5px;color:#7a7a7a;letter-spacing:0.447px;left:871.75px;transform-origin:0 50%;">#</span>
<span class="a t" style="top:427.00px;font-size:10.5px;line-height:10.5px;color:#3a3a3a;font-weight:700;letter-spacing:0.287px;left:885.50px;transform-origin:0 50%;">Total</span>
<span class="a t" style="top:428.00px;font-size:10px;line-height:10px;color:#747474;letter-spacing:-0.117px;left:928.00px;transform-origin:0 50%;">Ab</span>
<span class="a t" style="top:427.00px;font-size:10.5px;line-height:10.5px;color:#3a3a3a;font-weight:700;transform:scaleX(1.0969);left:943.75px;transform-origin:0 50%;">Client</span>
<div class="a" style="left:380px;top:460.3px;width:808px;height:1px;background:#e2e2e2;"></div>
<span class="a t" style="top:447.00px;font-size:8.67px;line-height:8.67px;color:#333;left:388.80px;">1</span>
<span class="a t" style="top:447.00px;font-size:8.67px;line-height:8.67px;color:#333;left:404.70px;">CD</span>
<span class="a t" style="top:447.00px;font-size:8.67px;line-height:8.67px;color:#333;left:464.97px;">4</span>
<span class="a t" style="top:447.00px;font-size:8.67px;line-height:8.67px;color:#333;left:476.80px;">Bartok, Sonate pour violon solo</span>
<span class="a t" style="top:447.00px;font-size:8.67px;line-height:8.67px;color:#333;left:742.50px;">MK-42625</span>
<span class="a t" style="top:447.00px;font-size:8.67px;line-height:8.67px;color:#333;left:858.92px;">9</span>
<span class="a t" style="top:447.00px;font-size:8.67px;line-height:8.67px;color:#333;left:912.86px;">36</span>
<span class="a t" style="top:447.00px;font-size:8.67px;line-height:8.67px;color:#333;letter-spacing:0.003px;left:929.25px;transform-origin:0 50%;">Boîte à Musique d&#x27;Aline</span>
<div class="a" style="left:380px;top:479.2px;width:808px;height:1px;background:#e2e2e2;"></div>
<span class="a t" style="top:466.00px;font-size:8.67px;line-height:8.67px;color:#333;left:388.80px;">2</span>
<span class="a t" style="top:466.00px;font-size:8.67px;line-height:8.67px;color:#333;left:404.70px;">CD</span>
<span class="a t" style="top:466.00px;font-size:8.67px;line-height:8.67px;color:#333;left:464.97px;">7</span>
<span class="a t" style="top:466.00px;font-size:8.67px;line-height:8.67px;color:#333;left:476.80px;">Mozart, Messe en do mineur, K.427</span>
<span class="a t" style="top:466.00px;font-size:8.67px;line-height:8.67px;color:#333;left:742.50px;">420831-2</span>
<span class="a t" style="top:466.00px;font-size:8.67px;line-height:8.67px;color:#333;left:858.92px;">9</span>
<span class="a t" style="top:466.00px;font-size:8.67px;line-height:8.67px;color:#333;left:912.86px;">63</span>
<span class="a t" style="top:466.00px;font-size:8.67px;line-height:8.67px;color:#333;letter-spacing:0.003px;left:929.25px;transform-origin:0 50%;">Boîte à Musique d&#x27;Aline</span>
<div class="a" style="left:380px;top:498.0px;width:808px;height:1px;background:#e2e2e2;"></div>
<span class="a t" style="top:485.00px;font-size:8.67px;line-height:8.67px;color:#333;left:388.80px;">3</span>
<span class="a t" style="top:485.00px;font-size:8.67px;line-height:8.67px;color:#333;left:404.70px;">CD</span>
<span class="a t" style="top:485.00px;font-size:8.67px;line-height:8.67px;color:#333;left:464.97px;">2</span>
<span class="a t" style="top:485.00px;font-size:8.67px;line-height:8.67px;color:#333;left:476.80px;">Luening, Musique électronique</span>
<span class="a t" style="top:485.00px;font-size:8.67px;line-height:8.67px;color:#333;left:742.50px;">CD 611</span>
<span class="a t" style="top:485.00px;font-size:8.67px;line-height:8.67px;color:#333;left:854.11px;">10</span>
<span class="a t" style="top:485.00px;font-size:8.67px;line-height:8.67px;color:#333;left:912.86px;">20</span>
<span class="a t" style="top:485.00px;font-size:8.67px;line-height:8.67px;color:#333;letter-spacing:0.003px;left:929.25px;transform-origin:0 50%;">Boîte à Musique d&#x27;Aline</span>
<div class="a" style="left:380px;top:516.9px;width:808px;height:1px;background:#e2e2e2;"></div>
<span class="a t" style="top:503.00px;font-size:8.67px;line-height:8.67px;color:#333;left:388.80px;">4</span>
<span class="a t" style="top:503.00px;font-size:8.67px;line-height:8.67px;color:#333;left:404.70px;">DVD</span>
<span class="a t" style="top:503.00px;font-size:8.67px;line-height:8.67px;color:#333;left:464.97px;">9</span>
<span class="a t" style="top:503.00px;font-size:8.67px;line-height:8.67px;color:#333;left:476.80px;">Scarlatti, Stabat Mater</span>
<span class="a t" style="top:503.00px;font-size:8.67px;line-height:8.67px;color:#333;left:742.50px;">SBT 4828</span>
<span class="a t" style="top:503.00px;font-size:8.67px;line-height:8.67px;color:#333;left:858.92px;">6</span>
<span class="a t" style="top:503.00px;font-size:8.67px;line-height:8.67px;color:#333;left:912.86px;">54</span>
<span class="a t" style="top:503.00px;font-size:8.67px;line-height:8.67px;color:#333;letter-spacing:0.003px;left:929.25px;transform-origin:0 50%;">Boîte à Musique d&#x27;Aline</span>
<div class="a" style="left:380px;top:535.7px;width:808px;height:1px;background:#e2e2e2;"></div>
<span class="a t" style="top:522.00px;font-size:8.67px;line-height:8.67px;color:#333;left:388.80px;">5</span>
<span class="a t" style="top:522.00px;font-size:8.67px;line-height:8.67px;color:#333;left:404.70px;">CD</span>
<span class="a t" style="top:522.00px;font-size:8.67px;line-height:8.67px;color:#333;left:460.80px;">11</span>
<span class="a t" style="top:522.00px;font-size:8.67px;line-height:8.67px;color:#333;left:476.80px;">Beethoven, Sonate Pathétique, Arrau</span>
<span class="a t" style="top:522.00px;font-size:8.67px;line-height:8.67px;color:#333;left:742.50px;">420153-2</span>
<span class="a t" style="top:522.00px;font-size:8.67px;line-height:8.67px;color:#333;left:858.92px;">6</span>
<span class="a t" style="top:522.00px;font-size:8.67px;line-height:8.67px;color:#333;left:912.86px;">66</span>
<span class="a t" style="top:522.00px;font-size:8.67px;line-height:8.67px;color:#333;letter-spacing:0.003px;left:929.25px;transform-origin:0 50%;">Boîte à Musique d&#x27;Aline</span>
<div class="a" style="left:380px;top:554.5px;width:808px;height:1px;background:#e2e2e2;"></div>
<span class="a t" style="top:541.00px;font-size:8.67px;line-height:8.67px;color:#333;left:388.80px;">6</span>
<span class="a t" style="top:541.00px;font-size:8.67px;line-height:8.67px;color:#333;left:404.70px;">CD</span>
<span class="a t" style="top:541.00px;font-size:8.67px;line-height:8.67px;color:#333;left:464.97px;">8</span>
<span class="a t" style="top:541.00px;font-size:8.67px;line-height:8.67px;color:#333;left:476.80px;">Mendelssohn, Marche guerrière des prêtre</span>
<span class="a t" style="top:541.00px;font-size:8.67px;line-height:8.67px;color:#333;left:742.50px;">SMK 4759</span>
<span class="a t" style="top:541.00px;font-size:8.67px;line-height:8.67px;color:#333;left:858.92px;">9</span>
<span class="a t" style="top:541.00px;font-size:8.67px;line-height:8.67px;color:#333;left:912.86px;">72</span>
<span class="a t" style="top:541.00px;font-size:8.67px;line-height:8.67px;color:#333;letter-spacing:0.003px;left:929.25px;transform-origin:0 50%;">Boîte à Musique d&#x27;Aline</span>
<span class="a t" style="top:560.00px;font-size:8.67px;line-height:8.67px;color:#333;left:388.80px;">7</span>
<span class="a t" style="top:560.00px;font-size:8.67px;line-height:8.67px;color:#333;left:404.70px;">CD</span>
<span class="a t" style="top:560.00px;font-size:8.67px;line-height:8.67px;color:#333;left:460.16px;">10</span>
<span class="a t" style="top:560.00px;font-size:8.67px;line-height:8.67px;color:#333;left:476.80px;">Pizzetti, Messa di Requiem</span>
<span class="a t" style="top:560.00px;font-size:8.67px;line-height:8.67px;color:#333;left:742.50px;">CHAN 896</span>
<span class="a t" style="top:560.00px;font-size:8.67px;line-height:8.67px;color:#333;left:854.11px;">10</span>
<span class="a t" style="top:560.00px;font-size:8.67px;line-height:8.67px;color:#333;left:912.86px;">96</span>
<span class="a t" style="top:560.00px;font-size:8.67px;line-height:8.67px;color:#333;letter-spacing:0.003px;left:929.25px;transform-origin:0 50%;">Boîte à Musique d&#x27;Aline</span>
<div class="a" style="left:400.8px;top:443.5px;width:1px;height:130.7px;background:#e0e0e0;"></div>
<div class="a" style="left:440.0px;top:443.5px;width:1px;height:130.7px;background:#e0e0e0;"></div>
<div class="a" style="left:472.8px;top:443.5px;width:1px;height:130.7px;background:#e0e0e0;"></div>
<div class="a" style="left:736.3px;top:443.5px;width:1px;height:130.7px;background:#e0e0e0;"></div>
<div class="a" style="left:814.0px;top:443.5px;width:1px;height:130.7px;background:#e0e0e0;"></div>
<div class="a" style="left:865.8px;top:443.5px;width:1px;height:130.7px;background:#e0e0e0;"></div>
<div class="a" style="left:925.1px;top:443.5px;width:1px;height:130.7px;background:#e0e0e0;"></div>
<div class="a" style="left:1182.0px;top:443.5px;width:1px;height:130.7px;background:#e0e0e0;"></div>
<div class="a" style="left:1188.6px;top:419.8px;width:11.4px;height:154.6px;background:#e9e9e9;"></div>
<div class="a" style="left:1188.6px;top:419.8px;width:11.4px;height:14.8px;background:#fff;border:1px solid #d4d4d4;"></div>
<svg class="a" style="left:1191px;top:425px;" width="8" height="5" viewBox="-0.2 -0.3 8 5" fill="none"><path d="M3 0L6 3.5H0z" fill="#444"/></svg>
<div class="a" style="left:1188.6px;top:434.8px;width:11.4px;height:5.4px;background:#fff;border:1px solid #d4d4d4;"></div>
<div class="a" style="left:1188.6px;top:560.2px;width:11.4px;height:13.6px;background:#fff;border:1px solid #d4d4d4;"></div>
<svg class="a" style="left:1191px;top:564px;" width="8" height="6" viewBox="-0.2 -0.8 8 6" fill="none"><path d="M0 0H6L3 3.5z" fill="#555"/></svg>
<div class="a" style="left:380px;top:574px;width:808.6px;height:12px;background:#e9e9e9;border:0;border-top:1px solid #dcdcdc;"></div>
<div class="a" style="left:380px;top:574px;width:14.3px;height:12px;background:#fff;border:1px solid #d4d4d4;"></div>
<svg class="a" style="left:385px;top:577px;" width="5" height="7" viewBox="-0.3 -0.2 5 7" fill="none"><path d="M3.6 0V5.4L0 2.7z" fill="#444"/></svg>
<div class="a" style="left:395px;top:574px;width:663px;height:12px;background:#fff;border:1px solid #d4d4d4;"></div>
<div class="a" style="left:1174.2px;top:574px;width:14.3px;height:12px;background:#fff;border:1px solid #d4d4d4;"></div>
<svg class="a" style="left:1179px;top:577px;" width="5" height="7" viewBox="-0.3 -0.2 5 7" fill="none"><path d="M0 0L3.6 2.7L0 5.4z" fill="#444"/></svg>
<div class="a" style="left:1188.6px;top:574px;width:11.4px;height:12px;background:#fff;"></div>
<div class="a" style="left:0px;top:586px;width:1200px;height:22px;background:#163754;"></div>
<div class="a" style="left:1168.4px;top:586px;width:31.6px;height:22px;background:#35699a;"></div>
<svg class="a" style="left:1176px;top:589px;" width="18" height="18" viewBox="0 0 18 18" fill="none"><g stroke="#dbe6f1" stroke-width="1"><path d="M0.5 1.4H16M0.5 15.3H16M8.6 3.2V13.7M5.7 6.1L8.6 3.2L11.5 6.1M5.7 10.8L8.6 13.7L11.5 10.8"/></g></svg>
<div class="a" style="left:6.8px;top:3.0px;width:32.4px;height:30.4px;background:#ff7f27;border:0;border-radius:50%;"></div>
<span class="a t" style="top:11.00px;font-size:16px;line-height:16px;color:#fff;font-weight:700;left:17.55px;">1</span>
<div class="a" style="left:302.0px;top:35.7px;width:32.4px;height:30.4px;background:#ff7f27;border:0;border-radius:50%;"></div>
<span class="a t" style="top:44.00px;font-size:16px;line-height:16px;color:#fff;font-weight:700;left:313.75px;">2</span>
<div class="a" style="left:1159.8px;top:34.8px;width:32.4px;height:30.4px;background:#ff7f27;border:0;border-radius:50%;"></div>
<span class="a t" style="top:42.00px;font-size:16px;line-height:16px;color:#fff;font-weight:700;left:1172.15px;">3</span>
<div class="a" style="left:1157.4px;top:424.2px;width:32.4px;height:30.4px;background:#ff7f27;border:0;border-radius:50%;"></div>
<span class="a t" style="top:434.00px;font-size:16px;line-height:16px;color:#fff;font-weight:700;left:1169.15px;">4</span>
<div class="a" style="left:379.1px;top:30px;width:1.1px;height:556px;background:#fb8099;"></div>
</body></html>
